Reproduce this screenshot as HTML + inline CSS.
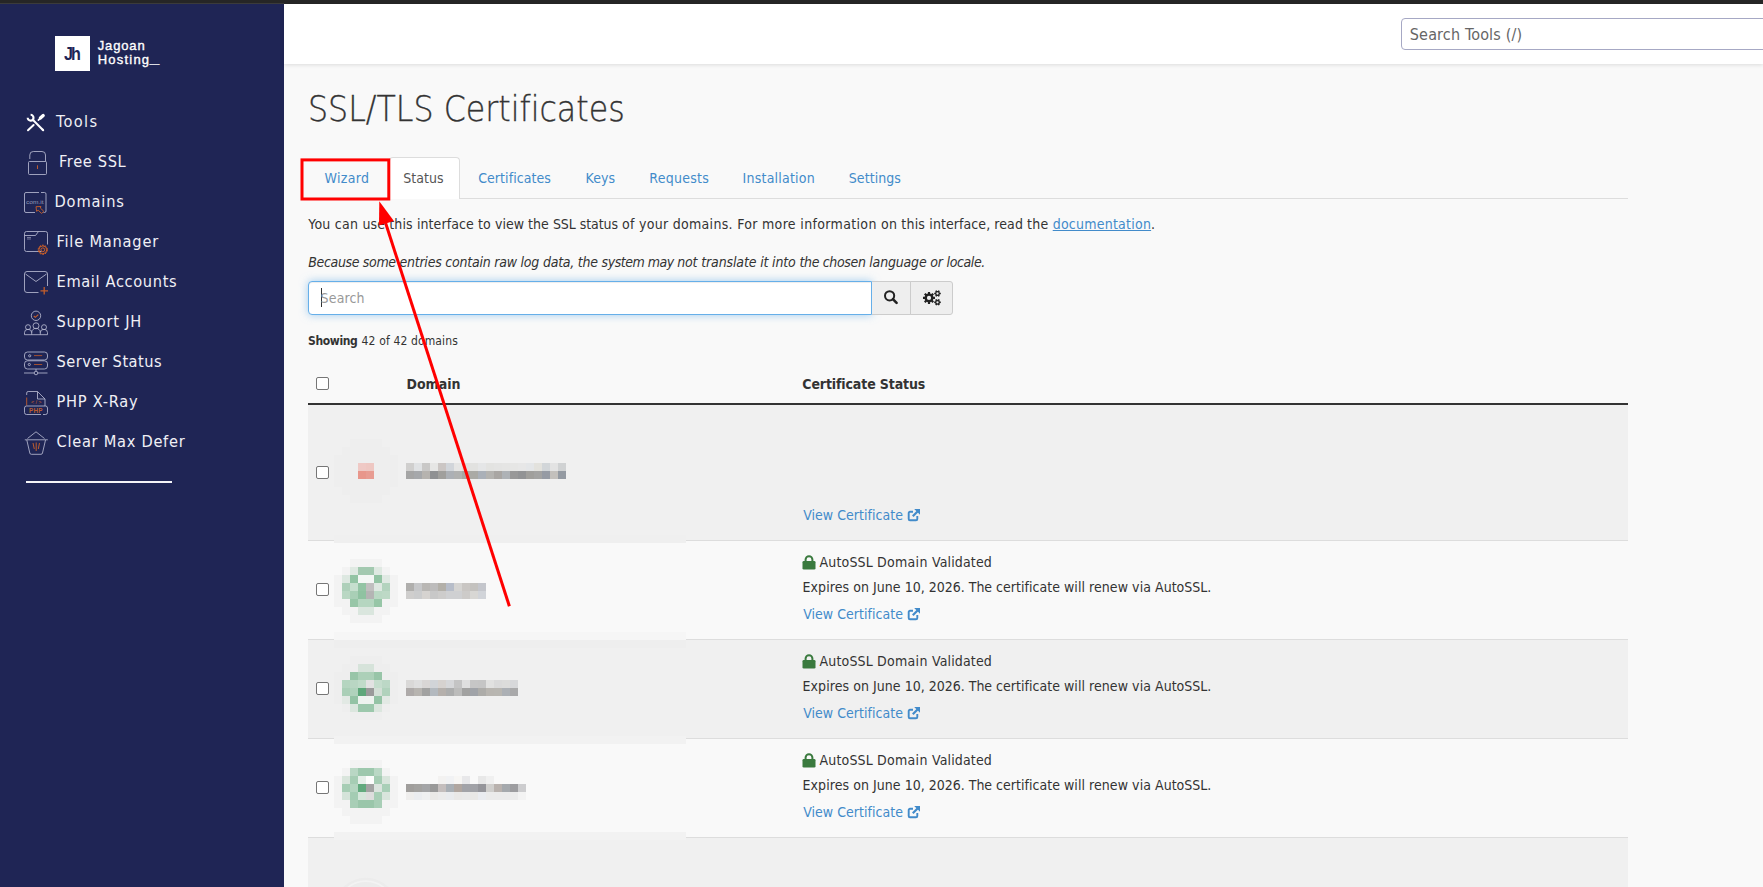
<!DOCTYPE html>
<html lang="en">
<head>
<meta charset="utf-8">
<title>SSL/TLS Certificates</title>
<style>
*{box-sizing:border-box;margin:0;padding:0}
html,body{width:1763px;height:887px;overflow:hidden;background:#f9f9f9;font-family:"DejaVu Sans Condensed","Liberation Sans",sans-serif;color:#333;font-size:14px}
.abs{position:absolute}
.t{position:absolute;white-space:nowrap;line-height:1}
#topbar{left:0;top:0;width:1763px;height:4px;background:#262626}
#topbar2{left:0;top:3px;width:284px;height:1px;background:#3b3b3b}
#sidebar{left:0;top:4px;width:284px;height:883px;background:#1f2555}
#header{left:284px;top:4px;width:1479px;height:60px;background:#fff;box-shadow:0 1px 4px rgba(0,0,0,.12)}
.nav{color:#f0f0f5;font-size:16.25px}
</style>
</head>
<body>
<div class="abs" id="topbar"></div>
<div class="abs" id="topbar2"></div>
<div class="abs" id="sidebar"></div>
<div class="abs" id="header"></div>
<!--SIDEBAR-->
<div class="abs" style="left:55px;top:36px;width:35px;height:35px;background:#fff"></div>
<div class="t" style="left:64.3px;top:43.5px;font:bold 17.5px 'Liberation Sans',sans-serif;color:#1f2555;letter-spacing:-2.2px;transform-origin:0 0;transform:scaleX(.92)">Jh</div>
<div class="t" id="lg1" style="left:97.7px;top:38.4px;font:13px 'Liberation Sans',sans-serif;color:#fff;-webkit-text-stroke:.35px #fff;letter-spacing:.87px">Jagoan</div>
<div class="t" id="lg2" style="left:97.7px;top:52.4px;font:13px 'Liberation Sans',sans-serif;color:#fff;-webkit-text-stroke:.35px #fff;letter-spacing:1.22px">Hosting<span style="font-size:17px;font-weight:bold;letter-spacing:0;line-height:0;position:relative;top:-1px;left:-.5px">_</span></div>

<!-- Tools icon -->
<svg class="abs" style="left:26px;top:113px" width="20" height="20" viewBox="0 0 20 20" fill="none" stroke="#fff" stroke-width="2" stroke-linecap="round">
<path d="M6.300 6.300 L17.200 17.200" stroke-linecap="butt"/><path d="M16.500 16.500 L17.200 17.200"/>
<path d="M1.700 4.700 A2.900 2.900 0 1 0 4.600 1.800" stroke-width="2.100" stroke-linecap="butt"/>
<path d="M2 17.300 L7.600 12"/>
<path d="M12.400 7.200 L15 4.600" stroke-width="1.700"/>
<path d="M14.400 5 L17.200 2.500" stroke-width="3.300"/>
</svg>
<div class="t nav" id="n1" style="left:56px;top:113.53px;letter-spacing:1.341px">Tools</div>

<!-- Free SSL icon -->
<svg class="abs" style="left:26px;top:149px" width="24" height="28" viewBox="0 0 24 28" fill="none" stroke="#b6b8d0" stroke-width=".85">
<rect x="2.5" y="12.5" width="18" height="13" rx="1"/>
<path d="M3.8 10 V6 A3.5 3.5 0 0 1 7.3 2.5 H16 A3.5 3.5 0 0 1 19.5 6 V12.5"/>
<path d="M11.5 16.3 V20" stroke="#d9662a"/>
</svg>
<div class="t nav" id="n2" style="left:59px;top:154.33px;letter-spacing:0.638px">Free SSL</div>

<!-- Domains icon -->
<svg class="abs" style="left:22px;top:190px" width="28" height="28" viewBox="0 0 28 28" fill="none" stroke="#b6b8d0" stroke-width=".85">
<path d="M17 2.500 H4 A1.500 1.500 0 0 0 2.500 4 V21 A1.500 1.500 0 0 0 4 22.500 H13"/>
<path d="M19 2.500 H22.500 A1.500 1.500 0 0 1 24 4 V21 A1.500 1.500 0 0 1 22.500 22.500 H21.500"/>
<text x="4" y="14.300" font-family="Liberation Sans, sans-serif" font-size="5.500" fill="#b6b8d0" fill-opacity=".8" stroke="none" textLength="17.500" lengthAdjust="spacingAndGlyphs">com.it</text>
<path d="M14 16.700 L19 16.500 L18.300 18 L21.800 21.300 L19.600 23.500 L16.300 20.200 L14.600 21.300 Z" stroke="#c9602a" stroke-width=".9"/>
</svg>
<div class="t nav" id="n3" style="left:54.5px;top:193.63px;letter-spacing:0.857px">Domains</div>

<!-- File Manager icon -->
<svg class="abs" style="left:22px;top:229px" width="30" height="28" viewBox="0 0 30 28" fill="none" stroke="#b6b8d0" stroke-width=".85">
<path d="M19.500 22.500 H4.500 A2 2 0 0 1 2.500 20.500 V4.500 A2 2 0 0 1 4.500 2.500 H23.500 A2 2 0 0 1 25.500 4.500 V15.500"/>
<path d="M2.500 6.500 H13.500 L16.500 2.500"/>
<path d="M5 8.500 H9 M5 10 H9" stroke-width=".8" opacity=".7"/>
<circle cx="20.800" cy="20.800" r="1.900" stroke="#dd6524" stroke-width=".9"/>
<circle cx="20.800" cy="20.800" r="4.600" stroke="#dd6524" stroke-width="1" stroke-dasharray="1.800 1.100"/>
<circle cx="20.800" cy="20.800" r="3.900" stroke="#dd6524" stroke-width=".9"/>
</svg>
<div class="t nav" id="n4" style="left:56.5px;top:233.63px;letter-spacing:0.782px">File Manager</div>

<!-- Email icon -->
<svg class="abs" style="left:22px;top:269px" width="30" height="28" viewBox="0 0 30 28" fill="none" stroke="#b6b8d0" stroke-width=".85">
<path d="M16.500 23.500 H5 A2.500 2.500 0 0 1 2.500 21 V5 A2.500 2.500 0 0 1 5 2.500 H23 A2.500 2.500 0 0 1 25.500 5 V17"/>
<path d="M3.500 5 L14 12.500 L24.500 5"/>
<path d="M18.500 21.800 H26 M22.200 18 V25.500" stroke="#c25e2c" stroke-width="1.300"/>
</svg>
<div class="t nav" id="n5" style="left:56.500px;top:273.63px;letter-spacing:0.644px">Email Accounts</div>

<!-- Support icon -->
<svg class="abs" style="left:22px;top:309px" width="30" height="28" viewBox="0 0 30 28" fill="none" stroke="#b6b8d0" stroke-width=".85">
<circle cx="14" cy="6.800" r="4.700"/>
<path d="M11.800 7 L13.300 8.300 L16.300 5.600" stroke="#c9602a" stroke-width="1.100"/>
<circle cx="6" cy="18.200" r="2.500"/>
<circle cx="14" cy="16.800" r="3"/>
<circle cx="22" cy="18.200" r="2.500"/>
<path d="M2.500 25.700 V23.600 A3.600 3.300 0 0 1 9.700 23.600 V25.700 M18.300 25.700 V23.600 A3.600 3.300 0 0 1 25.500 23.600 V25.700 M9.700 24 V23.300 A4.300 4 0 0 1 18.300 23.300 V24 M2.500 25.700 H25.500"/>
</svg>
<div class="t nav" id="n6" style="left:56.500px;top:313.63px;letter-spacing:0.783px">Support JH</div>

<!-- Server icon -->
<svg class="abs" style="left:22px;top:349px" width="30" height="28" viewBox="0 0 30 28" fill="none" stroke="#b6b8d0" stroke-width=".85">
<rect x="2.500" y="3" width="23" height="8" rx="3"/>
<rect x="2.500" y="11.800" width="23" height="8.200" rx="3"/>
<circle cx="7.700" cy="6.800" r="1.100"/>
<circle cx="7.300" cy="15.500" r="1.100"/>
<path d="M12 6.600 H20.200 M12 15.500 H20.200" stroke="#b9582b"/>
<path d="M14 20 V22.300 M2 24 H12.300 M15.700 24 H25.500"/>
<circle cx="14" cy="24" r="1.800"/>
</svg>
<div class="t nav" id="n7" style="left:56.500px;top:353.63px;letter-spacing:0.502px">Server Status</div>

<!-- PHP icon -->
<svg class="abs" style="left:22px;top:389px" width="30" height="28" viewBox="0 0 30 28" fill="none" stroke="#b6b8d0" stroke-width=".85">
<path d="M4.700 6 V4 A1.500 1.500 0 0 1 6.200 2.500 H15.500 L23 10 V17"/>
<path d="M15.500 2.500 V10 H23"/>
<path d="M4.700 8.500 V16.500" stroke="#c9602a"/>
<path d="M19 25.500 H4.500 A2 2 0 0 1 2.500 23.500 V19 A2 2 0 0 1 4.500 17 H23.500 A2 2 0 0 1 25.500 19 V23.500 A2 2 0 0 1 23.500 25.500 H21"/>
<text x="7" y="23.800" font-family="Liberation Sans, sans-serif" font-size="6.300" font-weight="bold" fill="#cf6329" fill-opacity=".9" stroke="none" textLength="13.500">PHP</text>
<text x="9" y="15.300" font-family="Liberation Sans, sans-serif" font-size="5.500" fill="#cf6329" stroke="none" textLength="10.500">&lt;/&gt;</text>
</svg>
<div class="t nav" id="n8" style="left:56.500px;top:393.63px;letter-spacing:0.743px">PHP X-Ray</div>

<!-- Bucket icon -->
<svg class="abs" style="left:22px;top:429px" width="30" height="28" viewBox="0 0 30 28" fill="none" stroke="#b6b8d0" stroke-width=".85">
<path d="M5.500 9.500 L14 2.800 L22.500 9.500"/>
<path d="M2.800 10.800 H25.800"/>
<path d="M4.800 11 L7.800 24 Q8 25.300 9.300 25.300 H19 Q20.300 25.300 20.500 24 L23.500 11"/>
<path d="M11 14 L12.300 20 M14.200 13.500 V22 M17.500 14 L16.300 20" stroke="#cf6329" stroke-width=".9"/>
</svg>
<div class="t nav" id="n9" style="left:56.500px;top:433.63px;letter-spacing:0.717px">Clear Max Defer</div>

<div class="abs" style="left:26px;top:481.300px;width:146px;height:1.600px;background:#f4f4f8"></div>
<!--/SIDEBAR-->
<!--MAIN-->
<div class="abs" style="left:1401px;top:18px;width:380px;height:32px;background:#fff;border:1px solid #a6a8c4;border-radius:4px"></div>
<div class="t" style="left:1409.8px;top:27.1px;font-size:16px;color:#666;letter-spacing:0.165px">Search Tools (/)</div>
<div class="t" id="title" style="left:308.1px;top:91.2px;font-family:'DejaVu Sans Light','DejaVu Sans',sans-serif;font-weight:200;font-size:35.5px;color:#333;-webkit-text-stroke:.35px #333;font-variant-ligatures:none;transform-origin:0 0;transform:scaleX(.892)">SSL/TLS Certificates</div>
<div class="abs" style="left:308px;top:198px;width:1320px;height:1px;background:#ddd"></div>
<div class="abs" style="left:389px;top:157px;width:71px;height:42px;background:#fff;border:1px solid #ddd;border-bottom:none;border-radius:4px 4px 0 0"></div>
<div class="t" id="tab0" style="left:324.5px;top:171px;color:#428bca;letter-spacing:0.319px">Wizard</div>
<div class="t" id="tab1" style="left:403.3px;top:171px;color:#555;letter-spacing:0.012px">Status</div>
<div class="t" id="tab2" style="left:478.2px;top:171px;color:#428bca;letter-spacing:0.064px">Certificates</div>
<div class="t" id="tab3" style="left:585.6px;top:171px;color:#428bca;letter-spacing:0.057px">Keys</div>
<div class="t" id="tab4" style="left:649.3px;top:171px;color:#428bca;letter-spacing:0.261px">Requests</div>
<div class="t" id="tab5" style="left:742.6px;top:171px;color:#428bca;letter-spacing:0.212px">Installation</div>
<div class="t" id="tab6" style="left:848.8px;top:171px;color:#428bca;letter-spacing:0.061px">Settings</div>
<div class="t" id="p1" style="left:308.3px;top:216.9px"><span style="letter-spacing:0.255px">You can </span><span style="letter-spacing:0.124px">use this </span><span style="letter-spacing:0.099px">interface to </span><span style="letter-spacing:0.024px">view the </span><span style="letter-spacing:-0.056px">SSL status </span><span style="letter-spacing:0.281px">of your </span><span style="letter-spacing:0.302px">domains. For </span><span style="letter-spacing:0.343px">more information </span><span style="letter-spacing:0.191px">on this </span><span style="letter-spacing:0.080px">interface, read </span><span style="letter-spacing:0.231px">the <span style="color:#428bca;text-decoration:underline">documentation</span>.</span></div>
<div class="t" id="p2" style="left:308.3px;top:255.1px;font-style:italic"><span style="letter-spacing:-0.348px">Because some </span><span style="letter-spacing:-0.220px">entries contain </span><span style="letter-spacing:-0.226px">raw log </span><span style="letter-spacing:-0.235px">data, the </span><span style="letter-spacing:-0.489px">system may </span><span style="letter-spacing:-0.136px">not translate </span><span style="letter-spacing:-0.170px">it into </span><span style="letter-spacing:-0.336px">the chosen </span><span style="letter-spacing:-0.186px">language or </span><span style="letter-spacing:-0.402px">locale.</span></div>
<div class="abs" style="left:308px;top:281px;width:564px;height:34px;background:#fff;border:1px solid #66afe9;border-radius:4px 0 0 4px;box-shadow:inset 0 1px 1px rgba(0,0,0,.075),0 0 8px rgba(102,175,233,.6)"></div>
<div class="abs" style="left:321px;top:288px;width:1px;height:19px;background:#333"></div>
<div class="t" id="ph" style="left:320.6px;top:291px;color:#999;letter-spacing:0.150px">Search</div>
<div class="abs" style="left:872px;top:281px;width:39px;height:34px;background:#eee;border:1px solid #ccc;border-left:none"></div>
<div class="abs" style="left:910px;top:281px;width:43px;height:34px;background:#eee;border:1px solid #ccc;border-radius:0 3px 3px 0"></div>
<svg class="abs" style="left:880px;top:287px" width="24" height="24" viewBox="0 0 24 24" fill="none" stroke="#222" stroke-width="2"><circle cx="9.600" cy="8.800" r="4.600"/><path d="M12.900 12.200 L16.600 15.900" stroke-width="2.600" stroke-linecap="round"/></svg>
<svg class="abs" style="left:920px;top:285px" width="24" height="26" viewBox="0 0 24 26"><path d="M15.01 11.83 L15.01 13.97 L13.35 14.04 L12.88 15.18 L14.00 16.39 L12.49 17.90 L11.28 16.78 L10.14 17.25 L10.07 18.91 L7.93 18.91 L7.86 17.25 L6.72 16.78 L5.51 17.90 L4.00 16.39 L5.12 15.18 L4.65 14.04 L2.99 13.97 L2.99 11.83 L4.65 11.76 L5.12 10.62 L4.00 9.41 L5.51 7.90 L6.72 9.02 L7.86 8.55 L7.93 6.89 L10.07 6.89 L10.14 8.55 L11.28 9.02 L12.49 7.90 L14.00 9.41 L12.88 10.62 L13.35 11.76 Z M11.10 12.90 A2.1 2.1 0 1 0 6.90 12.90 A2.1 2.1 0 1 0 11.10 12.90 Z M20.81 7.71 L20.81 9.29 L19.86 9.33 L19.40 10.12 L19.84 10.97 L18.47 11.76 L17.96 10.96 L17.04 10.96 L16.53 11.76 L15.16 10.97 L15.60 10.12 L15.14 9.33 L14.19 9.29 L14.19 7.71 L15.14 7.67 L15.60 6.88 L15.16 6.03 L16.53 5.24 L17.04 6.04 L17.96 6.04 L18.47 5.24 L19.84 6.03 L19.40 6.88 L19.86 7.67 Z M18.65 8.50 A1.15 1.15 0 1 0 16.35 8.50 A1.15 1.15 0 1 0 18.65 8.50 Z M20.81 16.51 L20.81 18.09 L19.86 18.13 L19.40 18.92 L19.84 19.77 L18.47 20.56 L17.96 19.76 L17.04 19.76 L16.53 20.56 L15.16 19.77 L15.60 18.92 L15.14 18.13 L14.19 18.09 L14.19 16.51 L15.14 16.47 L15.60 15.68 L15.16 14.83 L16.53 14.04 L17.04 14.84 L17.96 14.84 L18.47 14.04 L19.84 14.83 L19.40 15.68 L19.86 16.47 Z M18.65 17.30 A1.15 1.15 0 1 0 16.35 17.30 A1.15 1.15 0 1 0 18.65 17.30 Z" fill="#222" fill-rule="evenodd"/></svg>
<div class="t" id="sh1" style="left:308px;top:334.9px;font-size:12px;font-weight:bold;letter-spacing:-0.361px">Showing</div>
<div class="t" id="sh2" style="left:361.6px;top:334.9px;font-size:12px;letter-spacing:0.132px">42 of 42 domains</div>
<div class="abs" style="left:316px;top:377px;width:13px;height:13px;background:#fff;border:1px solid #767676;border-radius:2px"></div>
<div class="t" id="th1" style="left:406.5px;top:376.7px;font-weight:bold;letter-spacing:-0.006px">Domain</div>
<div class="t" id="th2" style="left:802.3px;top:376.7px;font-weight:bold;letter-spacing:-0.128px">Certificate Status</div>
<div class="abs" style="left:308px;top:403px;width:1320px;height:2px;background:#333"></div>
<div class="abs" style="left:308px;top:405px;width:1320px;height:135px;background:#f0f0f0"></div>
<div class="abs" style="left:308px;top:540px;width:1320px;height:1px;background:#ddd"></div>
<div class="abs" style="left:308px;top:541px;width:1320px;height:98px;background:#f9f9f9"></div>
<div class="abs" style="left:308px;top:639px;width:1320px;height:1px;background:#ddd"></div>
<div class="abs" style="left:308px;top:640px;width:1320px;height:98px;background:#f0f0f0"></div>
<div class="abs" style="left:308px;top:738px;width:1320px;height:1px;background:#ddd"></div>
<div class="abs" style="left:308px;top:739px;width:1320px;height:98px;background:#f9f9f9"></div>
<div class="abs" style="left:308px;top:837px;width:1320px;height:1px;background:#ddd"></div>
<div class="abs" style="left:308px;top:838px;width:1320px;height:62px;background:#f0f0f0"></div>
<div class="t" id="vc0" style="left:803.2px;top:508.15px;color:#428bca;letter-spacing:0.034px">View Certificate</div>
<svg class="abs" style="left:906.7px;top:507.8px" width="14" height="14" viewBox="0 0 14 14" fill="none" stroke="#428bca"><path d="M10.300 8 V11 A1.300 1.300 0 0 1 9 12.300 H3 A1.300 1.300 0 0 1 1.700 11 V5 A1.300 1.300 0 0 1 3 3.700 H6" stroke-width="1.900"/><path d="M5.800 8.200 L11.500 2.500" stroke-width="2.200"/><path d="M7.200 1 H13 V6.800 Z" fill="#428bca" stroke="none"/></svg>
<div class="abs" style="left:316px;top:466px;width:13px;height:13px;background:#fff;border:1px solid #767676;border-radius:2px"></div>
<svg class="abs" style="left:802px;top:555.2px" width="14" height="15" viewBox="0 0 14 15"><rect x=".5" y="6" width="13" height="8.500" rx="1.300" fill="#3a7a3e"/><path d="M3.600 6.500 V4.600 A3.400 3.400 0 0 1 10.400 4.600 V6.500" fill="none" stroke="#3a7a3e" stroke-width="2"/></svg>
<div class="t" id="as0" style="left:819.6px;top:555.15px"><span style="letter-spacing:0.144px">AutoSSL </span><span style="letter-spacing:0.301px">Domain </span><span style="letter-spacing:0.143px">Validated</span></div>
<div class="t" id="ex0" style="left:802.5px;top:579.95px"><span style="letter-spacing:0.074px">Expires on </span><span style="letter-spacing:0.027px">June 10, </span><span style="letter-spacing:-0.018px">2026. The </span><span style="letter-spacing:0.032px">certificate will </span><span style="letter-spacing:0.077px">renew via </span><span style="letter-spacing:-0.007px">AutoSSL.</span></div>
<div class="t" id="vc1" style="left:803.2px;top:607.15px;color:#428bca;letter-spacing:0.034px">View Certificate</div>
<svg class="abs" style="left:906.7px;top:606.8px" width="14" height="14" viewBox="0 0 14 14" fill="none" stroke="#428bca"><path d="M10.300 8 V11 A1.300 1.300 0 0 1 9 12.300 H3 A1.300 1.300 0 0 1 1.700 11 V5 A1.300 1.300 0 0 1 3 3.700 H6" stroke-width="1.900"/><path d="M5.800 8.200 L11.500 2.500" stroke-width="2.200"/><path d="M7.200 1 H13 V6.800 Z" fill="#428bca" stroke="none"/></svg>
<div class="abs" style="left:316px;top:583px;width:13px;height:13px;background:#fff;border:1px solid #767676;border-radius:2px"></div>
<svg class="abs" style="left:802px;top:654.2px" width="14" height="15" viewBox="0 0 14 15"><rect x=".5" y="6" width="13" height="8.500" rx="1.300" fill="#3a7a3e"/><path d="M3.600 6.500 V4.600 A3.400 3.400 0 0 1 10.400 4.600 V6.500" fill="none" stroke="#3a7a3e" stroke-width="2"/></svg>
<div class="t" id="as1" style="left:819.6px;top:654.15px"><span style="letter-spacing:0.144px">AutoSSL </span><span style="letter-spacing:0.301px">Domain </span><span style="letter-spacing:0.143px">Validated</span></div>
<div class="t" id="ex1" style="left:802.5px;top:678.95px"><span style="letter-spacing:0.074px">Expires on </span><span style="letter-spacing:0.027px">June 10, </span><span style="letter-spacing:-0.018px">2026. The </span><span style="letter-spacing:0.032px">certificate will </span><span style="letter-spacing:0.077px">renew via </span><span style="letter-spacing:-0.007px">AutoSSL.</span></div>
<div class="t" id="vc2" style="left:803.2px;top:706.15px;color:#428bca;letter-spacing:0.034px">View Certificate</div>
<svg class="abs" style="left:906.7px;top:705.8px" width="14" height="14" viewBox="0 0 14 14" fill="none" stroke="#428bca"><path d="M10.300 8 V11 A1.300 1.300 0 0 1 9 12.300 H3 A1.300 1.300 0 0 1 1.700 11 V5 A1.300 1.300 0 0 1 3 3.700 H6" stroke-width="1.900"/><path d="M5.800 8.200 L11.500 2.500" stroke-width="2.200"/><path d="M7.200 1 H13 V6.800 Z" fill="#428bca" stroke="none"/></svg>
<div class="abs" style="left:316px;top:682px;width:13px;height:13px;background:#fff;border:1px solid #767676;border-radius:2px"></div>
<svg class="abs" style="left:802px;top:753.2px" width="14" height="15" viewBox="0 0 14 15"><rect x=".5" y="6" width="13" height="8.500" rx="1.300" fill="#3a7a3e"/><path d="M3.600 6.500 V4.600 A3.400 3.400 0 0 1 10.400 4.600 V6.500" fill="none" stroke="#3a7a3e" stroke-width="2"/></svg>
<div class="t" id="as2" style="left:819.6px;top:753.15px"><span style="letter-spacing:0.144px">AutoSSL </span><span style="letter-spacing:0.301px">Domain </span><span style="letter-spacing:0.143px">Validated</span></div>
<div class="t" id="ex2" style="left:802.5px;top:777.95px"><span style="letter-spacing:0.074px">Expires on </span><span style="letter-spacing:0.027px">June 10, </span><span style="letter-spacing:-0.018px">2026. The </span><span style="letter-spacing:0.032px">certificate will </span><span style="letter-spacing:0.077px">renew via </span><span style="letter-spacing:-0.007px">AutoSSL.</span></div>
<div class="t" id="vc3" style="left:803.2px;top:805.15px;color:#428bca;letter-spacing:0.034px">View Certificate</div>
<svg class="abs" style="left:906.7px;top:804.8px" width="14" height="14" viewBox="0 0 14 14" fill="none" stroke="#428bca"><path d="M10.300 8 V11 A1.300 1.300 0 0 1 9 12.300 H3 A1.300 1.300 0 0 1 1.700 11 V5 A1.300 1.300 0 0 1 3 3.700 H6" stroke-width="1.900"/><path d="M5.800 8.200 L11.500 2.500" stroke-width="2.200"/><path d="M7.200 1 H13 V6.800 Z" fill="#428bca" stroke="none"/></svg>
<div class="abs" style="left:316px;top:781px;width:13px;height:13px;background:#fff;border:1px solid #767676;border-radius:2px"></div>
<svg class="abs" style="left:0;top:0" width="1763" height="887" shape-rendering="crispEdges">
<rect x="334" y="535" width="352" height="8" fill="#efefef"/>
<rect x="334" y="632" width="352" height="8" fill="#f6f6f6"/>
<rect x="334" y="640" width="352" height="8" fill="#eeeeee"/>
<rect x="334" y="736" width="352" height="8" fill="#f2f2f2"/>
<rect x="334" y="832" width="352" height="8" fill="#f2f2f2"/>
<rect x="350" y="439" width="32" height="8" fill="#eeeeee"/>
<rect x="342" y="447" width="48" height="8" fill="#eeeeee"/>
<rect x="334" y="455" width="64" height="8" fill="#eeeeee"/>
<rect x="334" y="463" width="24" height="8" fill="#eeeeee"/>
<rect x="358" y="463" width="8" height="8" fill="#efc9c5"/>
<rect x="366" y="463" width="8" height="8" fill="#eec7c2"/>
<rect x="374" y="463" width="24" height="8" fill="#eeeeee"/>
<rect x="406" y="463" width="8" height="8" fill="#d0cfce"/>
<rect x="414" y="463" width="8" height="8" fill="#e0e2e4"/>
<rect x="422" y="463" width="8" height="8" fill="#c9c8c7"/>
<rect x="430" y="463" width="8" height="8" fill="#e6e6e5"/>
<rect x="438" y="463" width="8" height="8" fill="#cbc6c4"/>
<rect x="446" y="463" width="8" height="8" fill="#d1d5da"/>
<rect x="454" y="463" width="8" height="8" fill="#e5e5e4"/>
<rect x="462" y="463" width="8" height="8" fill="#e0e0de"/>
<rect x="470" y="463" width="8" height="8" fill="#e2e2e0"/>
<rect x="478" y="463" width="8" height="8" fill="#e5e6e7"/>
<rect x="486" y="463" width="8" height="8" fill="#e3e3e1"/>
<rect x="494" y="463" width="8" height="8" fill="#e4e4e3"/>
<rect x="502" y="463" width="8" height="8" fill="#e5e5e4"/>
<rect x="510" y="463" width="8" height="8" fill="#e6e6e5"/>
<rect x="518" y="463" width="8" height="8" fill="#e7e7e7"/>
<rect x="526" y="463" width="8" height="8" fill="#e4e6e8"/>
<rect x="534" y="463" width="8" height="8" fill="#e3e2dd"/>
<rect x="542" y="463" width="8" height="8" fill="#d2d6d9"/>
<rect x="550" y="463" width="8" height="8" fill="#e3e3e3"/>
<rect x="558" y="463" width="8" height="8" fill="#d0d2d3"/>
<rect x="334" y="471" width="24" height="8" fill="#eeeeee"/>
<rect x="358" y="471" width="8" height="8" fill="#e8968b"/>
<rect x="366" y="471" width="8" height="8" fill="#e89c92"/>
<rect x="374" y="471" width="24" height="8" fill="#eeeeee"/>
<rect x="406" y="471" width="8" height="8" fill="#a5a5a5"/>
<rect x="414" y="471" width="8" height="8" fill="#a6a8ab"/>
<rect x="422" y="471" width="8" height="8" fill="#b6b3af"/>
<rect x="430" y="471" width="8" height="8" fill="#8f9092"/>
<rect x="438" y="471" width="8" height="8" fill="#a09f9c"/>
<rect x="446" y="471" width="8" height="8" fill="#acb0b5"/>
<rect x="454" y="471" width="8" height="8" fill="#b0b1b0"/>
<rect x="462" y="471" width="8" height="8" fill="#a8a8a4"/>
<rect x="470" y="471" width="8" height="8" fill="#aaaaa5"/>
<rect x="478" y="471" width="8" height="8" fill="#aab0b8"/>
<rect x="486" y="471" width="8" height="8" fill="#b4b3b0"/>
<rect x="494" y="471" width="8" height="8" fill="#a9a6a3"/>
<rect x="502" y="471" width="8" height="8" fill="#aeb2b6"/>
<rect x="510" y="471" width="8" height="8" fill="#989898"/>
<rect x="518" y="471" width="8" height="8" fill="#929395"/>
<rect x="526" y="471" width="8" height="8" fill="#a09f9c"/>
<rect x="534" y="471" width="8" height="8" fill="#a3a3a2"/>
<rect x="542" y="471" width="8" height="8" fill="#969ba4"/>
<rect x="550" y="471" width="8" height="8" fill="#c3c0bc"/>
<rect x="558" y="471" width="8" height="8" fill="#949aa2"/>
<rect x="334" y="479" width="64" height="8" fill="#eeeeee"/>
<rect x="342" y="487" width="48" height="8" fill="#eeeeee"/>
<rect x="350" y="495" width="32" height="8" fill="#eeeeee"/>
<rect x="350" y="559" width="32" height="8" fill="#f3f3f3"/>
<rect x="342" y="567" width="8" height="8" fill="#f3f3f3"/>
<rect x="350" y="567" width="8" height="8" fill="#dfe9e2"/>
<rect x="358" y="567" width="16" height="8" fill="#a3c9b0"/>
<rect x="374" y="567" width="8" height="8" fill="#dfe9e2"/>
<rect x="382" y="567" width="8" height="8" fill="#f3f3f3"/>
<rect x="334" y="575" width="8" height="8" fill="#f3f3f3"/>
<rect x="342" y="575" width="8" height="8" fill="#dde8e1"/>
<rect x="350" y="575" width="8" height="8" fill="#93c4a4"/>
<rect x="358" y="575" width="16" height="8" fill="#f4f7f5"/>
<rect x="374" y="575" width="8" height="8" fill="#93c4a4"/>
<rect x="382" y="575" width="8" height="8" fill="#e0e9e3"/>
<rect x="390" y="575" width="8" height="8" fill="#f3f3f3"/>
<rect x="334" y="583" width="8" height="8" fill="#f3f3f3"/>
<rect x="342" y="583" width="8" height="8" fill="#aed0ba"/>
<rect x="350" y="583" width="8" height="8" fill="#c6dfce"/>
<rect x="358" y="583" width="8" height="8" fill="#93c4a4"/>
<rect x="366" y="583" width="8" height="8" fill="#c0bfbf"/>
<rect x="374" y="583" width="8" height="8" fill="#dee8e1"/>
<rect x="382" y="583" width="8" height="8" fill="#b3d3be"/>
<rect x="390" y="583" width="8" height="8" fill="#f3f3f3"/>
<rect x="406" y="583" width="8" height="8" fill="#b0afad"/>
<rect x="414" y="583" width="8" height="8" fill="#c6c7c9"/>
<rect x="422" y="583" width="8" height="8" fill="#b9b7b4"/>
<rect x="430" y="583" width="8" height="8" fill="#bdbcbc"/>
<rect x="438" y="583" width="8" height="8" fill="#b3b0a9"/>
<rect x="446" y="583" width="8" height="8" fill="#b7bdc9"/>
<rect x="454" y="583" width="8" height="8" fill="#d5d4d2"/>
<rect x="462" y="583" width="8" height="8" fill="#c9c6c3"/>
<rect x="470" y="583" width="8" height="8" fill="#c4c2bf"/>
<rect x="478" y="583" width="8" height="8" fill="#c4c6cc"/>
<rect x="334" y="591" width="8" height="8" fill="#f3f3f3"/>
<rect x="342" y="591" width="8" height="8" fill="#b9d7c3"/>
<rect x="350" y="591" width="8" height="8" fill="#a9cfb6"/>
<rect x="358" y="591" width="8" height="8" fill="#8fc2a1"/>
<rect x="366" y="591" width="8" height="8" fill="#b4b4b4"/>
<rect x="374" y="591" width="8" height="8" fill="#bad8c4"/>
<rect x="382" y="591" width="8" height="8" fill="#bdd9c6"/>
<rect x="390" y="591" width="8" height="8" fill="#f3f3f3"/>
<rect x="406" y="591" width="8" height="8" fill="#cfcecd"/>
<rect x="414" y="591" width="8" height="8" fill="#cbcccd"/>
<rect x="422" y="591" width="8" height="8" fill="#d6d3d0"/>
<rect x="430" y="591" width="8" height="8" fill="#c8c8c8"/>
<rect x="438" y="591" width="8" height="8" fill="#cdcccb"/>
<rect x="446" y="591" width="16" height="8" fill="#cfd0d2"/>
<rect x="462" y="591" width="8" height="8" fill="#cdcbc9"/>
<rect x="470" y="591" width="8" height="8" fill="#d8d7d4"/>
<rect x="478" y="591" width="8" height="8" fill="#d1d4d9"/>
<rect x="334" y="599" width="16" height="8" fill="#f3f3f3"/>
<rect x="350" y="599" width="8" height="8" fill="#97c6a7"/>
<rect x="358" y="599" width="16" height="8" fill="#b5d6c0"/>
<rect x="374" y="599" width="8" height="8" fill="#97c6a7"/>
<rect x="382" y="599" width="16" height="8" fill="#f3f3f3"/>
<rect x="342" y="607" width="16" height="8" fill="#f3f3f3"/>
<rect x="358" y="607" width="16" height="8" fill="#dae6de"/>
<rect x="374" y="607" width="16" height="8" fill="#f3f3f3"/>
<rect x="350" y="615" width="32" height="8" fill="#f3f3f3"/>
<rect x="350" y="656" width="32" height="8" fill="#eeeeee"/>
<rect x="342" y="664" width="16" height="8" fill="#eeeeee"/>
<rect x="358" y="664" width="16" height="8" fill="#d6e3da"/>
<rect x="374" y="664" width="16" height="8" fill="#eeeeee"/>
<rect x="334" y="672" width="16" height="8" fill="#eeeeee"/>
<rect x="350" y="672" width="8" height="8" fill="#98c5a8"/>
<rect x="358" y="672" width="16" height="8" fill="#acd0b8"/>
<rect x="374" y="672" width="8" height="8" fill="#98c5a8"/>
<rect x="382" y="672" width="16" height="8" fill="#eeeeee"/>
<rect x="334" y="680" width="8" height="8" fill="#eeeeee"/>
<rect x="342" y="680" width="8" height="8" fill="#b5d5c0"/>
<rect x="350" y="680" width="8" height="8" fill="#b9d6c3"/>
<rect x="358" y="680" width="8" height="8" fill="#c0dbc9"/>
<rect x="366" y="680" width="8" height="8" fill="#e2e2e2"/>
<rect x="374" y="680" width="8" height="8" fill="#c5ddcd"/>
<rect x="382" y="680" width="8" height="8" fill="#bcd8c6"/>
<rect x="390" y="680" width="8" height="8" fill="#eeeeee"/>
<rect x="406" y="680" width="8" height="8" fill="#d9d8d7"/>
<rect x="414" y="680" width="8" height="8" fill="#dedede"/>
<rect x="422" y="680" width="8" height="8" fill="#d9d6d5"/>
<rect x="430" y="680" width="8" height="8" fill="#d1d4d8"/>
<rect x="438" y="680" width="8" height="8" fill="#d6d2cf"/>
<rect x="446" y="680" width="8" height="8" fill="#d6d7d9"/>
<rect x="454" y="680" width="8" height="8" fill="#c4c4c4"/>
<rect x="462" y="680" width="8" height="8" fill="#dfdfdf"/>
<rect x="470" y="680" width="8" height="8" fill="#c6c6c6"/>
<rect x="478" y="680" width="8" height="8" fill="#c5c5c5"/>
<rect x="486" y="680" width="8" height="8" fill="#e1e1e0"/>
<rect x="494" y="680" width="8" height="8" fill="#dadada"/>
<rect x="502" y="680" width="8" height="8" fill="#dcdcdb"/>
<rect x="510" y="680" width="8" height="8" fill="#d7d8da"/>
<rect x="334" y="688" width="8" height="8" fill="#eeeeee"/>
<rect x="342" y="688" width="8" height="8" fill="#aacfb7"/>
<rect x="350" y="688" width="8" height="8" fill="#b0d2bc"/>
<rect x="358" y="688" width="8" height="8" fill="#5ea77a"/>
<rect x="366" y="688" width="8" height="8" fill="#9a9a9a"/>
<rect x="374" y="688" width="8" height="8" fill="#d3dfd6"/>
<rect x="382" y="688" width="8" height="8" fill="#b0d2bc"/>
<rect x="390" y="688" width="8" height="8" fill="#eeeeee"/>
<rect x="406" y="688" width="8" height="8" fill="#aeaaa9"/>
<rect x="414" y="688" width="8" height="8" fill="#b7b4b0"/>
<rect x="422" y="688" width="8" height="8" fill="#a2a2a1"/>
<rect x="430" y="688" width="8" height="8" fill="#b3b9bf"/>
<rect x="438" y="688" width="8" height="8" fill="#b5b0ac"/>
<rect x="446" y="688" width="8" height="8" fill="#acadad"/>
<rect x="454" y="688" width="8" height="8" fill="#bcbcbb"/>
<rect x="462" y="688" width="8" height="8" fill="#a2a2a1"/>
<rect x="470" y="688" width="8" height="8" fill="#a0a3a8"/>
<rect x="478" y="688" width="8" height="8" fill="#adaca9"/>
<rect x="486" y="688" width="8" height="8" fill="#b8b5b0"/>
<rect x="494" y="688" width="8" height="8" fill="#b8b6b1"/>
<rect x="502" y="688" width="8" height="8" fill="#acb0b5"/>
<rect x="510" y="688" width="8" height="8" fill="#a9a9aa"/>
<rect x="334" y="696" width="8" height="8" fill="#eeeeee"/>
<rect x="342" y="696" width="8" height="8" fill="#e2e9e4"/>
<rect x="350" y="696" width="8" height="8" fill="#94c3a5"/>
<rect x="358" y="696" width="16" height="8" fill="#eef3ef"/>
<rect x="374" y="696" width="8" height="8" fill="#94c3a5"/>
<rect x="382" y="696" width="8" height="8" fill="#e2e9e4"/>
<rect x="390" y="696" width="8" height="8" fill="#eeeeee"/>
<rect x="342" y="704" width="8" height="8" fill="#eeeeee"/>
<rect x="350" y="704" width="8" height="8" fill="#dbe6de"/>
<rect x="358" y="704" width="16" height="8" fill="#9cc8ac"/>
<rect x="374" y="704" width="8" height="8" fill="#dbe6de"/>
<rect x="382" y="704" width="8" height="8" fill="#eeeeee"/>
<rect x="350" y="712" width="32" height="8" fill="#eeeeee"/>
<rect x="350" y="760" width="32" height="8" fill="#f3f3f3"/>
<rect x="342" y="768" width="8" height="8" fill="#f3f3f3"/>
<rect x="350" y="768" width="8" height="8" fill="#b9d7c4"/>
<rect x="358" y="768" width="16" height="8" fill="#9dc8ad"/>
<rect x="374" y="768" width="8" height="8" fill="#bad8c5"/>
<rect x="382" y="768" width="8" height="8" fill="#f3f3f3"/>
<rect x="334" y="776" width="8" height="8" fill="#f3f3f3"/>
<rect x="342" y="776" width="8" height="8" fill="#d9e5dc"/>
<rect x="350" y="776" width="8" height="8" fill="#a6cdb4"/>
<rect x="358" y="776" width="8" height="8" fill="#e6efe9"/>
<rect x="366" y="776" width="8" height="8" fill="#fdfdfd"/>
<rect x="374" y="776" width="8" height="8" fill="#a6cdb4"/>
<rect x="382" y="776" width="8" height="8" fill="#d9e5dc"/>
<rect x="390" y="776" width="8" height="8" fill="#f3f3f3"/>
<rect x="438" y="776" width="8" height="8" fill="#f3f2f1"/>
<rect x="446" y="776" width="8" height="8" fill="#f1f2f4"/>
<rect x="454" y="776" width="8" height="8" fill="#f7f6f4"/>
<rect x="462" y="776" width="8" height="8" fill="#e8e8ea"/>
<rect x="470" y="776" width="8" height="8" fill="#f9f9f9"/>
<rect x="478" y="776" width="8" height="8" fill="#e8e8e8"/>
<rect x="486" y="776" width="8" height="8" fill="#f0f0f0"/>
<rect x="334" y="784" width="8" height="8" fill="#f3f3f3"/>
<rect x="342" y="784" width="8" height="8" fill="#a6cdb4"/>
<rect x="350" y="784" width="8" height="8" fill="#b4d5c0"/>
<rect x="358" y="784" width="8" height="8" fill="#62aa7e"/>
<rect x="366" y="784" width="8" height="8" fill="#a3a3a3"/>
<rect x="374" y="784" width="8" height="8" fill="#dbe4de"/>
<rect x="382" y="784" width="8" height="8" fill="#a9cfb7"/>
<rect x="390" y="784" width="8" height="8" fill="#f3f3f3"/>
<rect x="406" y="784" width="8" height="8" fill="#a09e9c"/>
<rect x="414" y="784" width="8" height="8" fill="#a3a2a0"/>
<rect x="422" y="784" width="8" height="8" fill="#a4a5a7"/>
<rect x="430" y="784" width="8" height="8" fill="#999999"/>
<rect x="438" y="784" width="8" height="8" fill="#c4bebd"/>
<rect x="446" y="784" width="8" height="8" fill="#a9afb5"/>
<rect x="454" y="784" width="8" height="8" fill="#b0a6a0"/>
<rect x="462" y="784" width="8" height="8" fill="#a2a3a8"/>
<rect x="470" y="784" width="8" height="8" fill="#a1a2a7"/>
<rect x="478" y="784" width="8" height="8" fill="#95959a"/>
<rect x="486" y="784" width="8" height="8" fill="#d0cfcd"/>
<rect x="494" y="784" width="8" height="8" fill="#b9b2ae"/>
<rect x="502" y="784" width="8" height="8" fill="#a5a9ad"/>
<rect x="510" y="784" width="8" height="8" fill="#9d9da0"/>
<rect x="518" y="784" width="8" height="8" fill="#cdcdcf"/>
<rect x="334" y="792" width="8" height="8" fill="#f3f3f3"/>
<rect x="342" y="792" width="8" height="8" fill="#d4e3d9"/>
<rect x="350" y="792" width="8" height="8" fill="#a4ccb3"/>
<rect x="358" y="792" width="8" height="8" fill="#d5e6db"/>
<rect x="366" y="792" width="8" height="8" fill="#dddddd"/>
<rect x="374" y="792" width="8" height="8" fill="#a8ceb6"/>
<rect x="382" y="792" width="8" height="8" fill="#d9e5dc"/>
<rect x="390" y="792" width="8" height="8" fill="#f3f3f3"/>
<rect x="406" y="792" width="8" height="8" fill="#efeeed"/>
<rect x="414" y="792" width="8" height="8" fill="#ebedf0"/>
<rect x="422" y="792" width="8" height="8" fill="#eff0f1"/>
<rect x="430" y="792" width="8" height="8" fill="#eae9e7"/>
<rect x="438" y="792" width="8" height="8" fill="#ebebeb"/>
<rect x="446" y="792" width="8" height="8" fill="#e9ebee"/>
<rect x="454" y="792" width="8" height="8" fill="#e9e8e7"/>
<rect x="462" y="792" width="8" height="8" fill="#e9e9e9"/>
<rect x="470" y="792" width="8" height="8" fill="#e9e8e6"/>
<rect x="478" y="792" width="8" height="8" fill="#eaecf0"/>
<rect x="486" y="792" width="24" height="8" fill="#ebebeb"/>
<rect x="510" y="792" width="8" height="8" fill="#ececec"/>
<rect x="518" y="792" width="8" height="8" fill="#f3f3f3"/>
<rect x="334" y="800" width="16" height="8" fill="#f3f3f3"/>
<rect x="350" y="800" width="8" height="8" fill="#a8ceb6"/>
<rect x="358" y="800" width="16" height="8" fill="#9ac6aa"/>
<rect x="374" y="800" width="8" height="8" fill="#a8ceb6"/>
<rect x="382" y="800" width="16" height="8" fill="#f3f3f3"/>
<rect x="342" y="808" width="48" height="8" fill="#f3f3f3"/>
<rect x="350" y="816" width="32" height="8" fill="#f3f3f3"/>
</svg>
<svg class="abs" style="left:326px;top:870px" width="80" height="17" viewBox="326 870 80 17"><circle cx="365.800" cy="909.700" r="32" fill="#ececec"/><circle cx="365.800" cy="909.700" r="28.500" fill="none" stroke="#f3f3f3" stroke-width="1.800"/></svg>

<svg class="abs" style="left:0;top:0" width="1763" height="887">
<rect x="302" y="159.900" width="86.800" height="39.100" fill="none" stroke="#ff0000" stroke-width="3"/>
<path d="M385.600 223 L509.400 606.200" stroke="#ff0000" stroke-width="3" fill="none"/>
<path d="M379.300 201.300 L379 225.500 L393.900 221 Z" fill="#ff0000"/>
</svg>

<!--/MAIN-->
</body>
</html>
